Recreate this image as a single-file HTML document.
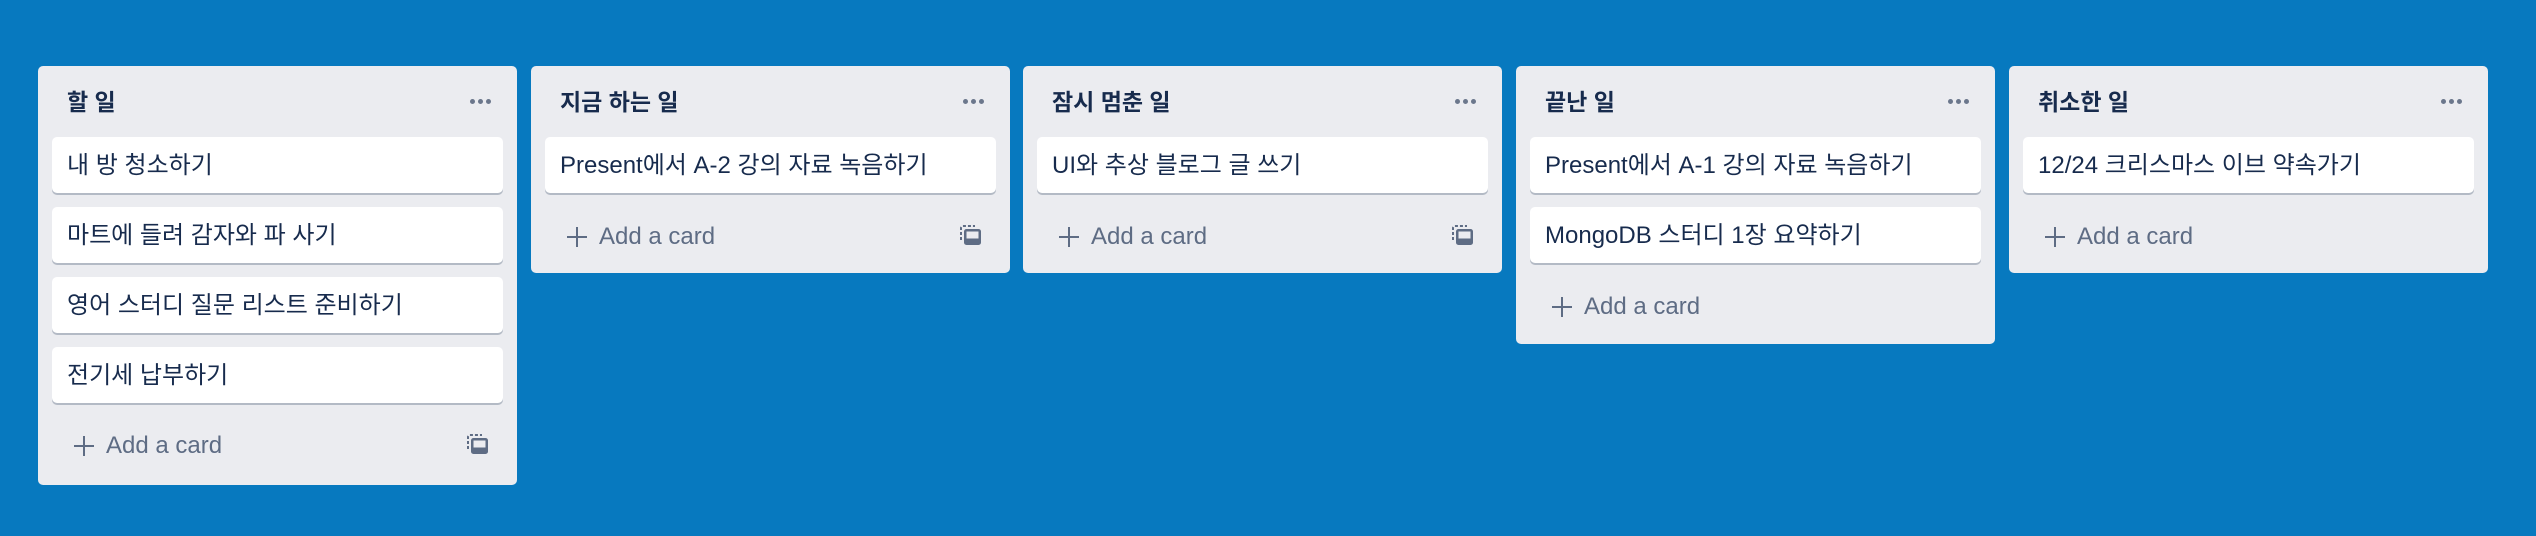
<!DOCTYPE html>
<html><head><meta charset="utf-8"><style>
*{box-sizing:border-box;margin:0;padding:0}
body{width:2536px;height:536px;background:#0779bf;font-family:"Liberation Sans","Noto Sans CJK KR",sans-serif;position:relative;overflow:hidden}
.list{position:absolute;top:66px;width:479px;background:#ebecf0;border-radius:5px;padding:0 14px 0 14px}
.hd{height:71px;position:relative}
.hd b{position:absolute;left:15px;top:20px;font-size:23px;color:#172b4d;font-weight:700;line-height:32px}
.dots{position:absolute;right:12px;top:33px;width:21px;height:5px;display:flex;justify-content:space-between}
.dots i{width:5px;height:5px;border-radius:50%;background:#6b778c}
.card{background:#fff;border-radius:5px;box-shadow:0 2px 0 #b3bac5;height:56px;margin-bottom:14px;padding-left:15px;font-size:24px;color:#172b4d;line-height:58px;white-space:nowrap}
.add{height:56px;position:relative;margin-top:0;margin-bottom:14px;color:#5e6c84;font-size:24px}
.add .pl{position:absolute;left:22px;top:20px;width:20px;height:20px}
.add .pl:before{content:"";position:absolute;left:9px;top:0;width:2px;height:20px;background:#5e6c84}
.add .pl:after{content:"";position:absolute;top:9px;left:0;height:2px;width:20px;background:#5e6c84}
.add span{position:absolute;left:54px;top:14px;line-height:32px}
.add svg{position:absolute;right:14px;top:18px}
.l1 .add{margin-top:0;margin-bottom:0;height:82px}
.l1 .add .pl{top:33px}.l1 .add span{top:27px}.l1 .add svg{top:31px}
</style></head><body>
<div class="list l1" style="left:38px;height:419px">
<div class="hd"><b>할 일</b><div class="dots"><i></i><i></i><i></i></div></div>
<div class="card">내 방 청소하기</div>
<div class="card">마트에 들려 감자와 파 사기</div>
<div class="card">영어 스터디 질문 리스트 준비하기</div>
<div class="card" style="margin-bottom:0">전기세 납부하기</div>
<div class="add"><div class="pl"></div><span>Add a card</span><svg width="22" height="22" viewBox="0 0 22 22"><path d="M1 15V3a2 2 0 0 1 2-2h12" fill="none" stroke="#5e6c84" stroke-width="2" stroke-dasharray="3 2"/><rect x="4" y="4" width="17" height="16" rx="2.5" fill="#5e6c84"/><rect x="6.5" y="6.5" width="12" height="7" fill="#ebecf0"/></svg></div>
</div>
<div class="list" style="left:531px;height:207px">
<div class="hd"><b>지금 하는 일</b><div class="dots"><i></i><i></i><i></i></div></div>
<div class="card">Present에서 A-2 강의 자료 녹음하기</div>
<div class="add"><div class="pl"></div><span>Add a card</span><svg width="22" height="22" viewBox="0 0 22 22"><path d="M1 15V3a2 2 0 0 1 2-2h12" fill="none" stroke="#5e6c84" stroke-width="2" stroke-dasharray="3 2"/><rect x="4" y="4" width="17" height="16" rx="2.5" fill="#5e6c84"/><rect x="6.5" y="6.5" width="12" height="7" fill="#ebecf0"/></svg></div>
</div>
<div class="list" style="left:1023px;height:207px">
<div class="hd"><b>잠시 멈춘 일</b><div class="dots"><i></i><i></i><i></i></div></div>
<div class="card">UI와 추상 블로그 글 쓰기</div>
<div class="add"><div class="pl"></div><span>Add a card</span><svg width="22" height="22" viewBox="0 0 22 22"><path d="M1 15V3a2 2 0 0 1 2-2h12" fill="none" stroke="#5e6c84" stroke-width="2" stroke-dasharray="3 2"/><rect x="4" y="4" width="17" height="16" rx="2.5" fill="#5e6c84"/><rect x="6.5" y="6.5" width="12" height="7" fill="#ebecf0"/></svg></div>
</div>
<div class="list" style="left:1516px;height:278px">
<div class="hd"><b>끝난 일</b><div class="dots"><i></i><i></i><i></i></div></div>
<div class="card">Present에서 A-1 강의 자료 녹음하기</div>
<div class="card">MongoDB 스터디 1장 요약하기</div>
<div class="add"><div class="pl"></div><span>Add a card</span></div>
</div>
<div class="list" style="left:2009px;height:207px">
<div class="hd"><b>취소한 일</b><div class="dots"><i></i><i></i><i></i></div></div>
<div class="card">12/24 크리스마스 이브 약속가기</div>
<div class="add"><div class="pl"></div><span>Add a card</span></div>
</div>
</body></html>
